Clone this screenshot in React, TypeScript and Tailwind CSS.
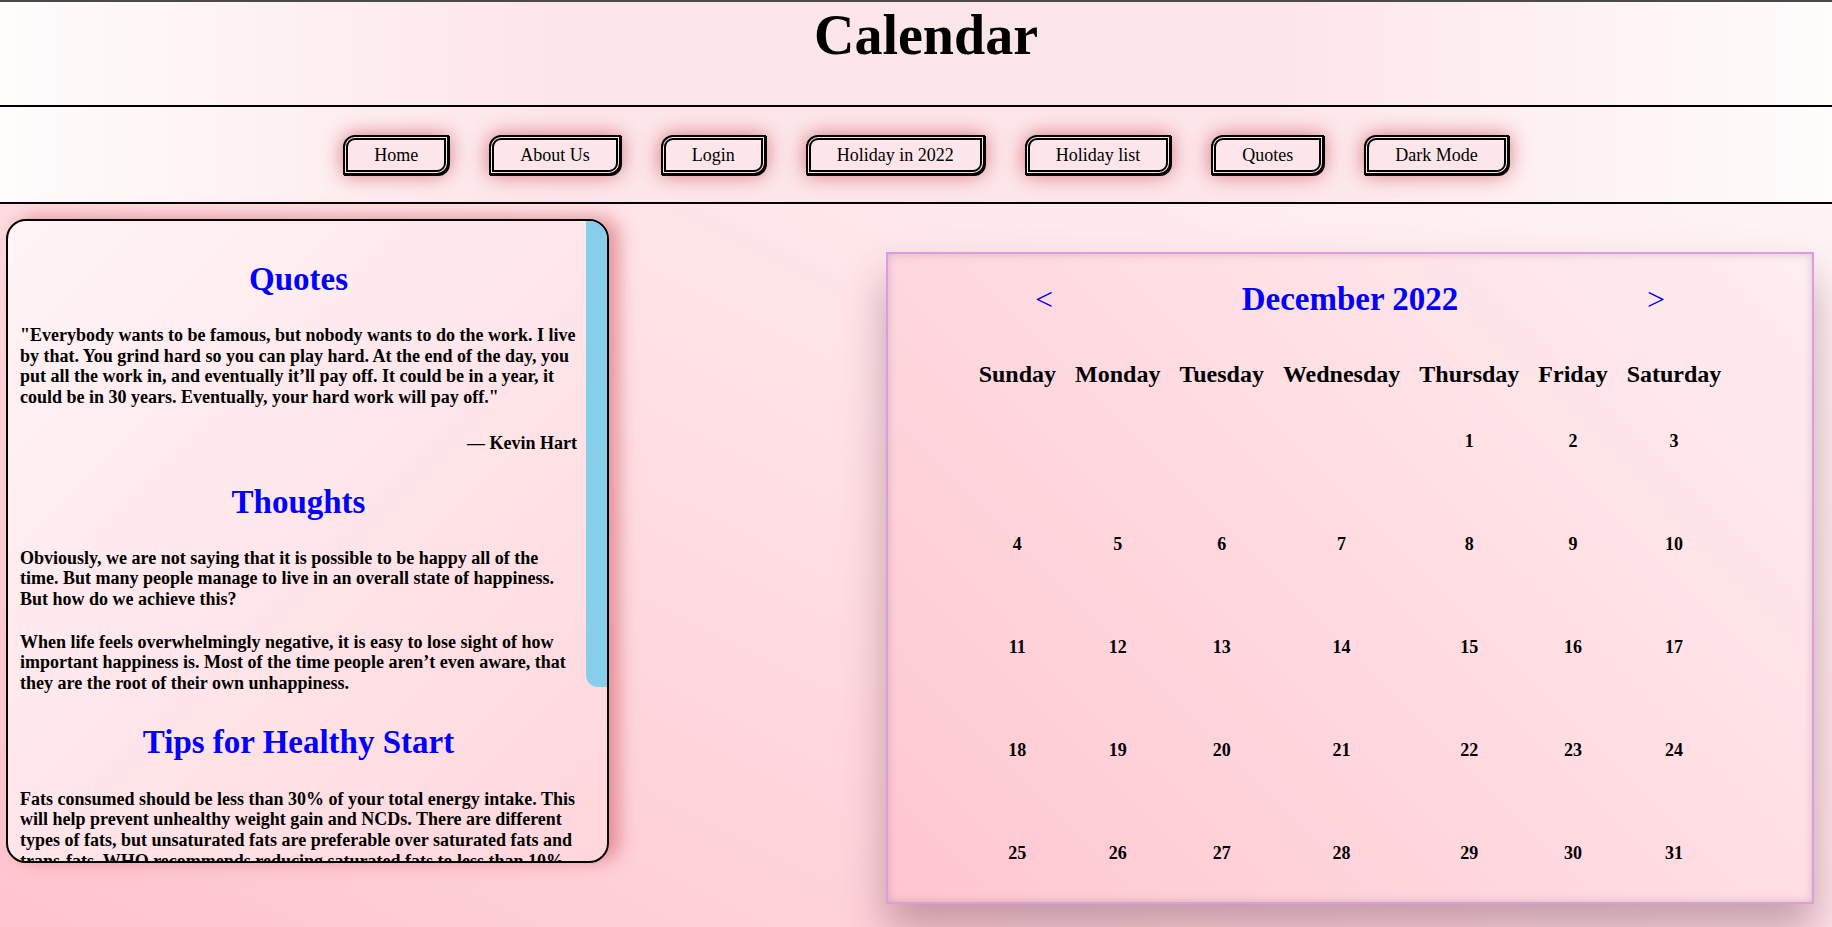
const navLinks = ["Home", "About Us", "Login", "Holiday in 2022", "Holiday list", "Quotes", "Dark Mode"];

const weekDays = ["Sunday", "Monday", "Tuesday", "Wednesday", "Thursday", "Friday", "Saturday"];

// December 2022 starts on a Thursday
const weeks: (number | null)[][] = [
  [null, null, null, null, 1, 2, 3],
  [4, 5, 6, 7, 8, 9, 10],
  [11, 12, 13, 14, 15, 16, 17],
  [18, 19, 20, 21, 22, 23, 24],
  [25, 26, 27, 28, 29, 30, 31],
];

function Heading({ children, className = "" }: { children: React.ReactNode; className?: string }) {
  return (
    <h2 className={`text-center text-[33px] font-bold leading-[38px] text-[#0000ff] ${className}`}>
      {children}
    </h2>
  );
}

function SidePanel() {
  return (
    <aside className="mt-[15px] flex h-[644px] w-[603px] shrink-0 overflow-hidden rounded-[20px] border-2 border-black bg-[linear-gradient(135deg,#fff5f6_0%,#ffe6ea_50%,#ffd6dc_100%)] shadow-[10px_-2px_18px_rgba(210,95,105,0.6)]">
      <div className="flex min-w-0 flex-1 flex-col overflow-hidden pl-[12px] pr-[9px] pt-[39px] text-[18px] font-bold leading-[20.7px]">
        <Heading>Quotes</Heading>
        <p className="mt-[27px]">
          "Everybody wants to be famous, but nobody wants to do the work. I live by that. You grind hard so you
          can play hard. At the end of the day, you put all the work in, and eventually it’ll pay off. It could
          be in a year, it could be in 30 years. Eventually, your hard work will pay off."
        </p>
        <p className="mt-[25px] text-right">— Kevin Hart</p>

        <Heading className="mt-[29px]">Thoughts</Heading>
        <p className="mt-[27px]">
          Obviously, we are not saying that it is possible to be happy all of the time. But many people manage to
          live in an overall state of happiness. But how do we achieve this?
        </p>
        <p className="mt-[22px]">
          When life feels overwhelmingly negative, it is easy to lose sight of how important happiness is. Most of
          the time people aren’t even aware, that they are the root of their own unhappiness.
        </p>

        <Heading className="mt-[29px]">Tips for Healthy Start</Heading>
        <p className="mt-[28px]">
          Fats consumed should be less than 30% of your total energy intake. This will help prevent unhealthy
          weight gain and NCDs. There are different types of fats, but unsaturated fats are preferable over
          saturated fats and trans-fats. WHO recommends reducing saturated fats to less than 10% of total energy
          intake; reducing trans-fats to less than 1% of total energy intake.
        </p>
      </div>
      {/* scrollbar */}
      <div className="w-[21px] shrink-0">
        <div className="h-[466px] rounded-bl-[12px] bg-[#87ceeb]" />
      </div>
    </aside>
  );
}

function CalendarPanel() {
  return (
    <section className="ml-auto mt-[48px] h-[652px] w-[928px] shrink-0 overflow-hidden border-2 border-[#d99ce6] bg-[linear-gradient(45deg,#ffc6d0_0%,#ffdbe1_50%,#ffeef1_100%)] pt-[26px] shadow-[0_26px_40px_rgba(110,60,80,0.4),inset_0_0_10px_rgba(0,0,0,0.16)]">
      <div className="mx-auto flex h-[38px] w-[630px] items-center justify-between text-[#0000ff]">
        <button className="text-[32px] leading-none">&lt;</button>
        <h2 className="text-[33px] font-bold leading-[38px]">December 2022</h2>
        <button className="text-[32px] leading-none">&gt;</button>
      </div>

      <table className="mx-auto mt-[40px] border-collapse">
        <thead>
          <tr className="h-[32px]">
            {weekDays.map((day) => (
              <th key={day} className="px-[9.5px] text-[24px] font-bold leading-none">
                {day}
              </th>
            ))}
          </tr>
        </thead>
        <tbody>
          {weeks.map((week, i) => (
            <tr key={i} className="h-[103px]">
              {week.map((date, j) => (
                <td key={j} className="text-center text-[18px] font-bold">
                  {date ?? ""}
                </td>
              ))}
            </tr>
          ))}
        </tbody>
      </table>
    </section>
  );
}

export default function App() {
  return (
    <div className="min-h-screen w-full bg-[linear-gradient(to_top_right,#ffc4ce_0%,#ffdfe4_45%,#fff0f2_80%,#fff8f9_100%)] font-['Liberation_Serif',serif] text-black">
      <header className="flex h-[107px] justify-center border-t-2 border-b-2 border-t-[#4a4a4a] border-b-black bg-[linear-gradient(90deg,#fffcfc_0%,#fde6ea_30%,#fde6ea_70%,#fffcfc_100%)] pl-5 pt-[5px]">
        <h1 className="text-[56px] font-bold leading-[56px]">Calendar</h1>
      </header>

      <nav className="flex h-[97px] items-center justify-center gap-[40px] border-b-2 border-black bg-[linear-gradient(90deg,#fffcfc_0%,#fde6ea_30%,#fde6ea_70%,#fffcfc_100%)] pl-5">
        {navLinks.map((label) => (
          <button
            key={label}
            className="h-[40px] rounded-tl-[12px] rounded-br-[12px] border-[5px] border-double border-black bg-[#fde6ea] px-[26px] text-[18px] leading-none shadow-[1px_1px_0_#000,0_0_20px_rgba(205,85,95,0.8)]"
          >
            {label}
          </button>
        ))}
      </nav>

      <main className="flex items-start pl-[6px] pr-[18px]">
        <SidePanel />
        <CalendarPanel />
      </main>
    </div>
  );
}
